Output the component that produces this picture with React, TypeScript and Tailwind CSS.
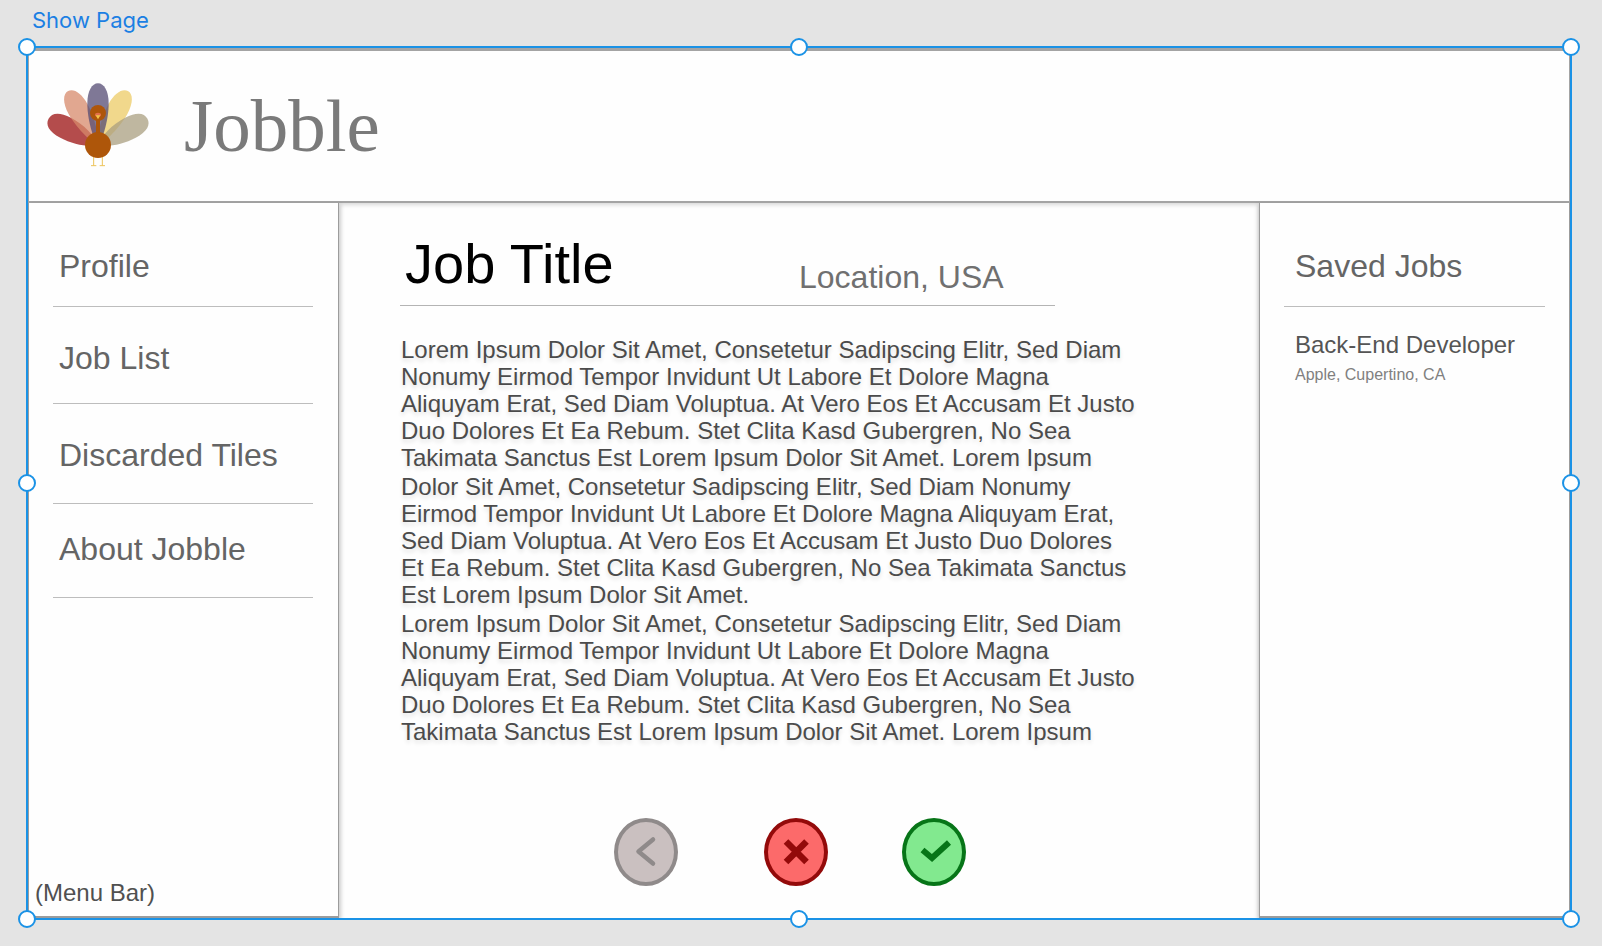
const navItems = [
  { label: 'Profile', spacing: 'pt-[45px] pb-[22px]' },
  { label: 'Job List', spacing: 'pt-[33px] pb-[27px]' },
  { label: 'Discarded Tiles', spacing: 'pt-[33px] pb-[30px]' },
  { label: 'About Jobble', spacing: 'pt-[27px] pb-[30px]' },
];

const savedJobs = [{ title: 'Back-End Developer', place: 'Apple, Cupertino, CA' }];

const paragraphs = [
  'Lorem Ipsum Dolor Sit Amet, Consetetur Sadipscing Elitr, Sed Diam Nonumy Eirmod Tempor Invidunt Ut Labore Et Dolore Magna Aliquyam Erat, Sed Diam Voluptua. At Vero Eos Et Accusam Et Justo Duo Dolores Et Ea Rebum. Stet Clita Kasd Gubergren, No Sea Takimata Sanctus Est Lorem Ipsum Dolor Sit Amet. Lorem Ipsum',
  'Dolor Sit Amet, Consetetur Sadipscing Elitr, Sed Diam Nonumy Eirmod Tempor Invidunt Ut Labore Et Dolore Magna Aliquyam Erat, Sed Diam Voluptua. At Vero Eos Et Accusam Et Justo Duo Dolores Et Ea Rebum. Stet Clita Kasd Gubergren, No Sea Takimata Sanctus Est Lorem Ipsum Dolor Sit Amet.',
  'Lorem Ipsum Dolor Sit Amet, Consetetur Sadipscing Elitr, Sed Diam Nonumy Eirmod Tempor Invidunt Ut Labore Et Dolore Magna Aliquyam Erat, Sed Diam Voluptua. At Vero Eos Et Accusam Et Justo Duo Dolores Et Ea Rebum. Stet Clita Kasd Gubergren, No Sea Takimata Sanctus Est Lorem Ipsum Dolor Sit Amet. Lorem Ipsum',
];

const handles = [
  'left-0 top-0',
  'left-1/2 top-0',
  'left-full top-0',
  'left-0 top-1/2',
  'left-full top-1/2',
  'left-0 top-full',
  'left-1/2 top-full',
  'left-full top-full',
];

const feather =
  'M0 0 C-16 -20 -32 -80 -32 -124 C-32 -162 -18 -185 0 -185 C18 -185 32 -162 32 -124 C32 -80 16 -20 0 0 Z';
const sideFeather =
  'M0 0 C-20 -20 -34 -68 -34 -110 C-34 -150 -20 -168 0 -168 C20 -168 34 -150 34 -110 C34 -68 20 -20 0 0 Z';

function TurkeyLogo() {
  return (
    <svg viewBox="0 0 300 252" className="h-[84px] w-[100px] shrink-0 overflow-visible" aria-hidden="true">
      <g transform="translate(150 186)" fillOpacity="0.75">
        <path d={feather} transform="rotate(29)" fill="#eccb66" />
        <path d={sideFeather} transform="rotate(62)" fill="#a99f80" />
        <path d={sideFeather} transform="rotate(-62)" fill="#9b1010" />
        <path d={feather} transform="rotate(-29)" fill="#d7896b" />
        <path d={feather} fill="#544b73" />
      </g>
      <path d="M137 216 V248 M163 216 V248 M129 248 H145 M155 248 H171" stroke="#ecc35a" strokeWidth="3" fill="none" />
      <rect x="144" y="106" width="12" height="50" fill="#ae560a" />
      <circle cx="150" cy="90" r="24" fill="#ae560a" />
      <circle cx="150" cy="186" r="39" fill="#ae560a" />
      <ellipse cx="150" cy="95" rx="9" ry="6" fill="#e2704a" />
      <path d="M143 97 H157 L150 109 Z" fill="#f3c548" />
    </svg>
  );
}

function Handle({ place }: { place: string }) {
  return (
    <span
      className={`absolute z-10 size-[18px] -translate-x-1/2 -translate-y-1/2 rounded-full border-2 border-[#1a92e6] bg-white ${place}`}
    />
  );
}

export default function App() {
  return (
    <div className="flex min-h-screen flex-col bg-[#e4e4e4] pr-[30px] pb-[26px] pl-[26px] font-['Liberation_Sans',Arial,sans-serif]">
      <div className="h-[46px] pt-1.5 pl-1.5 font-['Inter',sans-serif] text-[22px] leading-7 text-[#1b7fe3]">
        Show Page
      </div>

      <div className="relative flex flex-1 flex-col bg-[#1a92e6] p-0.5">
        <div className="pointer-events-none absolute inset-px">
          {handles.map((place) => (
            <Handle key={place} place={place} />
          ))}
        </div>

        <div className="flex flex-1 flex-col overflow-hidden bg-[#fefefe]">
          <header className="flex h-[155px] items-start border border-t-[3px] border-b-2 border-[#a4a4a4] pt-8 pl-[19px] shadow-[0_2px_4px_rgba(0,0,0,0.15)]">
            <TurkeyLogo />
            <span className="pt-[5px] pl-9 font-['Liberation_Serif',serif] text-[75px] leading-[75px] text-[#7a7a7a]">
              Jobble
            </span>
          </header>

          <div className="flex flex-1">
            <aside className="relative flex w-[311px] shrink-0 flex-col border-x border-b-2 border-[#9c9c9c] bg-[#fefefe] shadow-[2px_2px_4px_rgba(0,0,0,0.2)]">
              <nav className="pr-[25px] pl-6">
                {navItems.map((item) => (
                  <a
                    key={item.label}
                    href="#"
                    className={`block border-b border-[#bdbdbd] pl-1.5 text-[32px] leading-9 text-[#656565] ${item.spacing}`}
                  >
                    {item.label}
                  </a>
                ))}
              </nav>
              <p className="mt-auto pb-2.5 pl-1.5 text-2xl leading-[27px] text-[#505050]">(Menu Bar)</p>
            </aside>

            <main className="flex min-w-0 flex-1 flex-col pl-[61px]">
              <div className="flex h-[103px] max-w-[655px] items-start border-b border-[#b4b4b4] pt-[29px] pl-[5px]">
                <h1 className="w-[394px] shrink-0 text-[56px] leading-[64px] text-black">Job Title</h1>
                <p className="pt-[27px] text-[32px] leading-9 whitespace-nowrap text-[#707070]">Location, USA</p>
              </div>
              <div className="flex max-w-[741px] flex-col gap-0.5 pt-[30px] pl-px text-2xl leading-[27px] text-[#4b4b4b] text-shadow-[0_3px_4px_rgba(0,0,0,0.12)]">
                {paragraphs.map((text) => (
                  <p key={text}>{text}</p>
                ))}
              </div>
              <div className="mt-auto flex pb-8 pl-[214px]">
                <button
                  type="button"
                  aria-label="Back"
                  className="mr-[86px] flex h-[68px] w-16 items-center justify-center rounded-[50%] border-4 border-[#8f8a8a] bg-[#cac0c0]"
                >
                  <svg viewBox="0 0 56 60" className="h-[60px] w-14 shrink-0">
                    <path d="M35 17.500 L20.500 29.500 L35 41.500" fill="none" stroke="#8f8a8a" strokeWidth="4.500" strokeLinecap="round" strokeLinejoin="round" />
                  </svg>
                </button>
                <button
                  type="button"
                  aria-label="Discard"
                  className="mr-[74px] flex h-[68px] w-16 items-center justify-center rounded-[50%] border-4 border-[#930a0a] bg-[#fc6a6a]"
                >
                  <svg viewBox="0 0 56 60" className="h-[60px] w-14 shrink-0">
                    <path d="M18 19.500 L38.500 40 M38.500 19.500 L18 40" fill="none" stroke="#930a0a" strokeWidth="6.500" />
                  </svg>
                </button>
                <button
                  type="button"
                  aria-label="Save"
                  className="flex h-[68px] w-16 items-center justify-center rounded-[50%] border-4 border-[#077518] bg-[#82e98f]"
                >
                  <svg viewBox="0 0 56 60" className="h-[60px] w-14 shrink-0">
                    <path d="M16.500 28 L26 36 L43 20.500" fill="none" stroke="#077518" strokeWidth="6" />
                  </svg>
                </button>
              </div>
            </main>

            <aside className="relative w-[311px] shrink-0 border-x border-b-2 border-[#9c9c9c] bg-[#fefefe] pr-6 pl-6 shadow-[-1px_2px_4px_rgba(0,0,0,0.25)]">
              <h2 className="border-b border-[#bdbdbd] pt-[45px] pb-[22px] pl-[11px] text-[32px] leading-9 text-[#656565]">
                Saved Jobs
              </h2>
              <ul className="pt-6 pl-[11px]">
                {savedJobs.map((job) => (
                  <li key={job.title}>
                    <a href="#" className="block">
                      <span className="block text-2xl leading-[27px] text-[#555555]">{job.title}</span>
                      <span className="block pt-1.5 text-base leading-[22px] text-[#808080]">{job.place}</span>
                    </a>
                  </li>
                ))}
              </ul>
            </aside>
          </div>
        </div>
      </div>
    </div>
  );
}
